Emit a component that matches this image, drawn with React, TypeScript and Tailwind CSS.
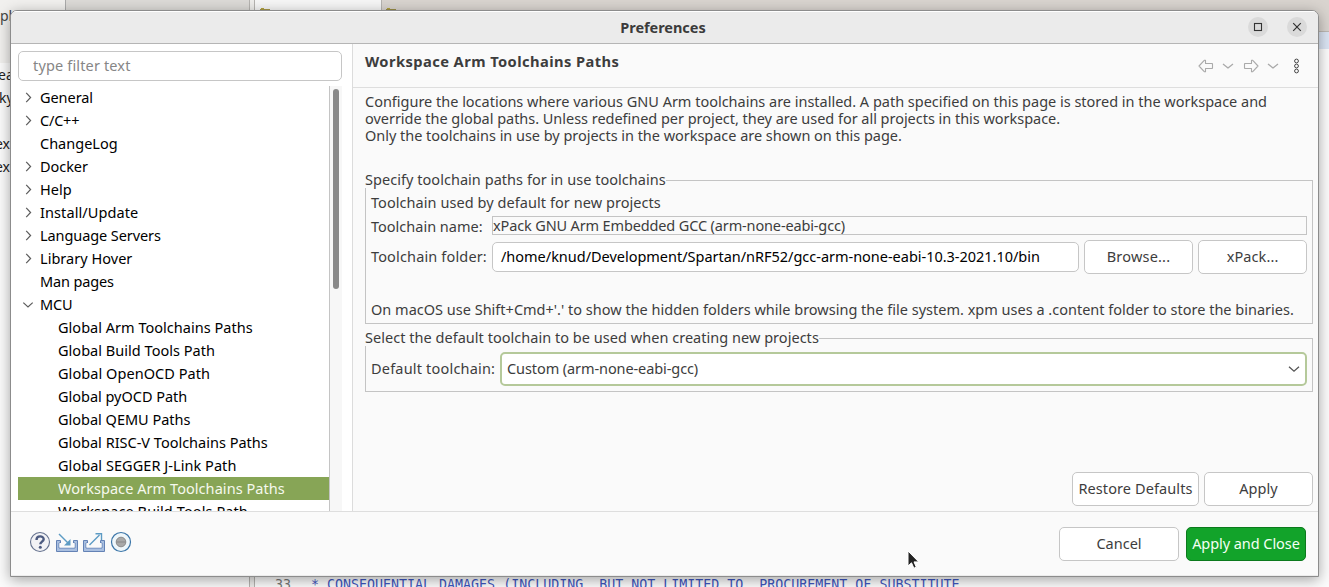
import React from "react";

type Node = { label: string; kind: "closed" | "open" | "leaf" | "child"; tracking: string; selected?: boolean };

const nodes: Node[] = [
  { label: "General", kind: "closed", tracking: "tracking-[-0.06px]" },
  { label: "C/C++", kind: "closed", tracking: "tracking-[-0.2px]" },
  { label: "ChangeLog", kind: "leaf", tracking: "tracking-[0px]" },
  { label: "Docker", kind: "closed", tracking: "tracking-[-0.05px]" },
  { label: "Help", kind: "closed", tracking: "tracking-[0.05px]" },
  { label: "Install/Update", kind: "closed", tracking: "tracking-[0.09px]" },
  { label: "Language Servers", kind: "closed", tracking: "tracking-[-0.08px]" },
  { label: "Library Hover", kind: "closed", tracking: "tracking-[0.03px]" },
  { label: "Man pages", kind: "leaf", tracking: "tracking-[-0.15px]" },
  { label: "MCU", kind: "open", tracking: "tracking-[-0.2px]" },
  { label: "Global Arm Toolchains Paths", kind: "child", tracking: "tracking-[0.02px]" },
  { label: "Global Build Tools Path", kind: "child", tracking: "tracking-[0.03px]" },
  { label: "Global OpenOCD Path", kind: "child", tracking: "tracking-[0.06px]" },
  { label: "Global pyOCD Path", kind: "child", tracking: "tracking-[-0.02px]" },
  { label: "Global QEMU Paths", kind: "child", tracking: "tracking-[-0.01px]" },
  { label: "Global RISC-V Toolchains Paths", kind: "child", tracking: "tracking-[0px]" },
  { label: "Global SEGGER J-Link Path", kind: "child", tracking: "tracking-[0.05px]" },
  { label: "Workspace Arm Toolchains Paths", kind: "child", tracking: "tracking-[0.06px]", selected: true },
  { label: "Workspace Build Tools Path", kind: "child", tracking: "tracking-[0.1px]" },
];

function TreeRow({ node }: { node: Node }) {
  return (
    <div className={`flex h-[23px] shrink-0 items-center pl-1 ${node.selected ? "bg-[#87a556] text-[#f6f9ee]" : "text-black"}`}>
      <span className="flex w-[18px] shrink-0">
        {node.kind === "closed" && (
          <svg width="13" height="13" viewBox="0 0 13 13" fill="none" stroke="#5c5c5c" strokeWidth="1.2"><path d="M4.2 1.8 8.6 6.5 4.2 11.2" /></svg>
        )}
        {node.kind === "open" && (
          <svg width="13" height="13" viewBox="0 0 13 13" fill="none" stroke="#5c5c5c" strokeWidth="1.2"><path d="M1.3 4.6 6 9 10.7 4.6" /></svg>
        )}
      </span>
      <span className={`whitespace-nowrap ${node.kind === "child" ? "ml-[18px]" : ""} ${node.tracking}`}>{node.label}</span>
    </div>
  );
}

function Button({ children, className }: { children: React.ReactNode; className: string }) {
  return (
    <button className={`flex h-[34px] shrink-0 items-center justify-center whitespace-nowrap rounded-[5px] border ${className}`}>{children}</button>
  );
}

function Backdrop() {
  return (
    <div className="absolute inset-0 flex text-[14px] text-[#222]">
      <div className="w-[250px] overflow-hidden border-r border-[#b5b3b0] bg-[#fbfbfb]">
        <div className="flex h-[63px] bg-[#f1f0ee]">
          <div className="w-[65px] pt-[5px] text-[#444]"><span>pl</span></div>
          <div className="h-full flex-1 border-l border-[#aaa] bg-[#dcdad7]" />
        </div>
        <div className="flex flex-col whitespace-nowrap leading-[23px]">
          <span className="-ml-[2px]">ea</span>
          <span className="-ml-px">ky</span>
          <span className="h-[23px]" />
          <span className="-ml-[5px]">exa</span>
          <span className="-ml-[5px]">exa</span>
        </div>
      </div>
      <div className="w-[5px] border-r border-[#b5b3b0] bg-[#eeedeb]" />
      <div className="flex flex-1 flex-col bg-[#fcfcfc]">
        <div className="flex h-[32px] border-b border-[#bdb9b4] bg-[#d9d4cf]">
          <div className="w-[127px] border-r border-[#b5b3b0] bg-[#f6f6f6] pl-[5px] pt-[8px]">
            <div className="ml-px h-px w-[3px] bg-[#b5a53e]" />
            <div className="h-2 w-[10px] bg-[#a89a48]" />
          </div>
          <div className="pl-[4px] pt-[8px]">
            <div className="ml-px h-px w-[3px] bg-[#b5a53e]" />
            <div className="h-2 w-[10px] bg-[#9a8d48]" />
          </div>
        </div>
        <div className="h-[17px] bg-[#dbe5f4]" />
        <div className="mt-auto flex h-[11px] items-start overflow-hidden whitespace-pre pl-[13px] font-['DejaVu_Sans_Mono','Liberation_Mono',monospace] text-[13.3px] leading-[18px] text-[#3f57c0]">
          <span className="w-[43px] pl-[7px] text-[#777]">33</span>
          <span>* CONSEQUENTIAL DAMAGES (INCLUDING, BUT NOT LIMITED TO, PROCUREMENT OF SUBSTITUTE</span>
        </div>
      </div>
    </div>
  );
}

function TitleBar() {
  return (
    <header className="flex h-[33px] shrink-0 items-center border-b border-[#b5b5b5] bg-[#ebebeb] shadow-[inset_0_1px_0_#fff]">
      <h1 className="flex-1 pl-[67px] text-center text-[14.5px] font-bold leading-[20px] tracking-[-0.05px] text-[#3b3b3b]">Preferences</h1>
      <div className="flex w-[70px] gap-[19px]">
        <button aria-label="Maximize" className="size-5 rounded-full bg-[#dadada]">
          <svg width="20" height="20" viewBox="0 0 20 20" fill="none" stroke="#333" strokeWidth="1.1"><rect x="6.5" y="6.5" width="7" height="7" /></svg>
        </button>
        <button aria-label="Close" className="size-5 rounded-full bg-[#dadada]">
          <svg width="20" height="20" viewBox="0 0 20 20" fill="none" stroke="#333" strokeWidth="1.2"><path d="m6.2 6.2 7.6 7.6M13.8 6.2l-7.6 7.6" /></svg>
        </button>
      </div>
    </header>
  );
}

function Sidebar() {
  return (
    <aside className="flex w-[341px] shrink-0 flex-col bg-white pl-[7px] pt-[7px]">
      <input className="h-[30px] w-[324px] shrink-0 rounded-[5px] border border-[#c6c6c6] bg-white px-[14px] pb-[2px] tracking-[0.15px] placeholder:text-[#868686]" placeholder="type filter text" />
      <div className="mt-[5px] flex min-h-0 flex-1">
        <div className="flex w-[311px] flex-col overflow-hidden">{nodes.map((n) => <TreeRow key={n.label} node={n} />)}</div>
        <div className="w-[13px] border-l border-[#c4c4c4] bg-[#f7f7f7] pl-[3px] pt-[3px]">
          <div className="h-[200px] w-[6px] rounded-full bg-[#898989]" />
        </div>
      </div>
    </aside>
  );
}

function Navigation() {
  return (
    <svg className="mt-[14px]" width="106" height="16" viewBox="0 0 106 16" fill="none">
      <g stroke="#aaa" strokeWidth="1.1" strokeLinejoin="round">
        <path d="M1 8 6.5 2.2H7.5V5.5H14l.5.5v4l-.5.5H7.5v3.3H6.5Z" />
        <path d="M60 8 54.5 2.2h-1V5.5H47l-.5.5v4l.5.5h6.5v3.3h1Z" />
        <path d="m25 6 5 4 5-4M70 6l5 4 5-4" strokeWidth="1.3" />
      </g>
      <g stroke="#444" strokeWidth="1"><circle cx="98.5" cy="3" r="1.9" /><circle cx="98.5" cy="8" r="1.9" /><circle cx="98.5" cy="13" r="1.9" /></g>
    </svg>
  );
}

function GroupTitle({ children, tracking }: { children: React.ReactNode; tracking: string }) {
  return (
    <div className="flex h-[16px] items-center">
      <span className={`whitespace-nowrap ${tracking}`}>{children}</span>
      <div className="mt-[1px] h-2 flex-1 self-end border-r border-t border-[#c4c4c4]" />
    </div>
  );
}

function Page() {
  return (
    <main className="flex min-w-0 flex-1 flex-col border-l border-[#dcdcdc] bg-[#fafafa]">
      <div className="flex h-[44px] shrink-0 justify-between border-b border-[#dedede] pl-3 pr-[14px]">
        <h2 className="pt-[7px] text-[14.7px] font-bold leading-[20px] tracking-[0.42px]">Workspace Arm Toolchains Paths</h2>
        <Navigation />
      </div>
      <div className="flex flex-1 flex-col pl-[12px] pr-[5px] pt-[5px]">
        <div className="whitespace-nowrap leading-[17px]">
          <p className="tracking-[-0.012px]">Configure the locations where various GNU Arm toolchains are installed. A path specified on this page is stored in the workspace and</p>
          <p className="tracking-[-0.03px]">override the global paths. Unless redefined per project, they are used for all projects in this workspace.</p>
          <p className="tracking-[-0.035px]">Only the toolchains in use by projects in the workspace are shown on this page.</p>
        </div>
        <section className="mt-[28px]">
          <GroupTitle tracking="tracking-[0.04px]">Specify toolchain paths for in use toolchains</GroupTitle>
          <div className="flex h-[136px] flex-col whitespace-nowrap border border-t-0 border-[#c4c4c4] px-[5px]">
            <div className="mt-[4px] h-[20px] leading-[20px] tracking-[0.06px]">Toolchain used by default for new projects</div>
            <div className="mt-[3px] flex h-[20px] items-center">
              <span className="w-[121px] pt-[2px] leading-[20px] tracking-[0px]">Toolchain name:</span>
              <div className="flex h-[19px] flex-1 items-center border border-[#c4c4c4] pt-[2px] tracking-[-0.14px]">xPack GNU Arm Embedded GCC (arm-none-eabi-gcc)</div>
            </div>
            <div className="mt-[5px] flex h-[34px] items-center">
              <span className="w-[121px] tracking-[0.15px]">Toolchain folder:</span>
              <div className="flex h-[30px] w-[587px] items-center rounded-[5px] border border-[#c6c6c6] bg-white pl-2 tracking-[-0.02px] text-black">/home/knud/Development/Spartan/nRF52/gcc-arm-none-eabi-10.3-2021.10/bin</div>
              <Button className="ml-[5px] w-[109px] border-[#c6c6c6] bg-white tracking-[0.2px]">Browse...</Button>
              <Button className="ml-[5px] w-[109px] border-[#c6c6c6] bg-white tracking-[0.1px]">xPack...</Button>
            </div>
            <div className="mt-[25px] leading-[20px] tracking-[0.005px]">On macOS use Shift+Cmd+'.' to show the hidden folders while browsing the file system. xpm uses a .content folder to store the binaries.</div>
          </div>
        </section>
        <section className="mt-[6px]">
          <GroupTitle tracking="tracking-[0.03px]">Select the default toolchain to be used when creating new projects</GroupTitle>
          <div className="flex h-[46px] whitespace-nowrap border border-t-0 border-[#c4c4c4] px-[5px] pt-[6px]">
            <span className="w-[129px] leading-[33px] tracking-[0.19px]">Default toolchain:</span>
            <div className="flex h-[34px] flex-1 items-center justify-between rounded-[5px] border-2 border-[#b5c99a] bg-white pl-[5px] pr-[5px]">
              <span className="tracking-[-0.09px]">Custom (arm-none-eabi-gcc)</span>
              <svg width="12" height="12" viewBox="0 0 12 12" fill="none" stroke="#555" strokeWidth="1.3"><path d="m1 3.8 5 4.4 5-4.4" /></svg>
            </div>
          </div>
        </section>
        <div className="mb-[5px] mt-auto flex justify-end gap-[5px]">
          <Button className="w-[127px] border-[#c6c6c6] bg-white tracking-[0.1px]">Restore Defaults</Button>
          <Button className="w-[109px] border-[#c6c6c6] bg-white tracking-[0.1px]">Apply</Button>
        </div>
      </div>
    </main>
  );
}

function Footer() {
  return (
    <footer className="flex h-[65px] shrink-0 border-t border-[#dedede] bg-[#fafafa] pl-[18px] pr-[12px] shadow-[inset_0_-1px_0_#ececec]">
      <svg className="mt-[19px]" width="104" height="24" viewBox="0 0 104 24" fill="none">
        <circle cx="11" cy="11" r="9.5" fill="#f2f2f5" stroke="#64718e" strokeWidth="1.1" />
        <path d="M7.5 8.9C7.5 4.3 14.8 4.4 14.7 8.3 14.6 10.5 11.3 10.9 11.3 13.3" stroke="#4d5b80" strokeWidth="2.4" />
        <circle cx="11.3" cy="16.3" r="1.5" fill="#4d5b80" />
        <g stroke="#6482b5">
          <path d="M31.5 9.5h-4v11h21v-11h-4v2.5h1.5v5h-16v-5h1.5Z" fill="#a9bfe0" stroke="none" />
          <path d="M31.5 9.5h-4v11h21v-11h-4M31.5 9.5V12H30v5h16v-5h-1.500V9.500" />
          <path d="M58.5 9.500h-4v11h21v-11h-4v2.500h1.500v5h-16v-5h1.500Z" fill="#a9bfe0" stroke="none" />
          <path d="M58.5 9.500h-4v11h21v-11h-4M58.500 9.500V12H57v5h16v-5h-1.500V9.500" />
        </g>
        <path d="M32 9h12v3h1.500v4.500h-15V12H32Z" fill="#fafafa" />
        <path d="M59 9h12v3h1.500v4.500h-15V12H59Z" fill="#fafafa" />
        <g stroke="#5d9bc4" strokeWidth="1.4">
          <path d="m30 3 9 9" /><path d="M41.5 8v6.5H35Z" fill="#5d9bc4" stroke="none" />
          <path d="m60.500 14 10-10M66.500 2.700h6V9" />
        </g>
        <circle cx="92" cy="11" r="9.5" fill="#eef6fa" stroke="#3b75a8" strokeWidth="1.2" />
        <circle cx="92" cy="11" r="4.8" fill="#a8a8a8" stroke="#8b8b8b" />
        <path d="M87.5 11h9" stroke="#888" />
      </svg>
      <div className="ml-auto flex gap-[7px] pt-[15px]">
        <Button className="w-[120px] border-[#c6c6c6] bg-white">Cancel</Button>
        <Button className="w-[120px] border-[#0c7a1d] bg-[#12a32a] tracking-[-0.06px] text-[#f4fff4]">Apply and Close</Button>
      </div>
    </footer>
  );
}

export default function App() {
  return (
    <div className="relative h-[587px] w-[1329px] overflow-hidden font-['Noto_Sans',sans-serif] text-[14.5px]">
      <Backdrop />
      <div className="absolute left-[10px] top-[10px] flex h-[567px] w-[1309px] flex-col overflow-hidden rounded-t-[7px] border border-[#8c8c8c] bg-[#fafafa] text-[#3d3d3d] shadow-[0_3px_14px_rgba(0,0,0,0.35)]">
        <TitleBar />
        <div className="flex min-h-0 flex-1">
          <Sidebar />
          <Page />
        </div>
        <Footer />
      </div>
      <svg className="absolute left-[907px] top-[550px]" width="14" height="21" viewBox="0 0 14 21">
        <path d="M1 1v15l3.5-3.2 2.4 5.4 2.4-1-2.3-5.3h4.7Z" fill="#222" stroke="#fff" strokeWidth="1" />
      </svg>
    </div>
  );
}
